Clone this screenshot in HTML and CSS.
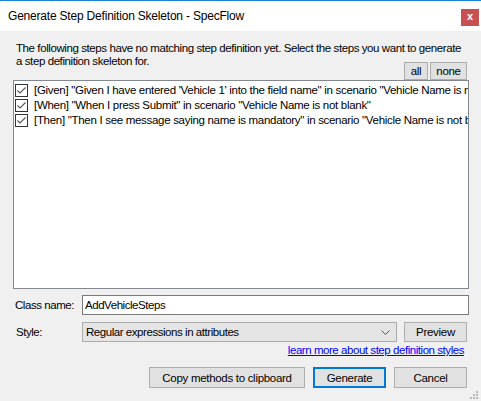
FILE: index.html
```html
<!DOCTYPE html>
<html>
<head>
<meta charset="utf-8">
<link rel="stylesheet" href="styles.css">
</head>
<body>
<div class="window">
  <div class="titlebar">
    <span class="title">Generate Step Definition Skeleton - SpecFlow</span>
    <span class="close">x</span>
  </div>
  <div class="content">
    <p class="intro">The following steps have no matching step definition yet. Select the steps you want to generate a step definition skeleton for.</p>
    <div class="toolbar">
      <button class="btn btn-all">all</button>
      <button class="btn btn-none">none</button>
    </div>
    <div class="list">
      <div class="item">
        <svg class="check" width="13" height="13" viewBox="0 0 13 13"><rect x="0.5" y="0.5" width="12" height="12" fill="#fff" stroke="#333"/><path d="M2.5 6.5 L5 9 L10.5 3.5" fill="none" stroke="#555" stroke-width="1.1"/></svg>
        <span class="text">[Given] "Given I have entered 'Vehicle 1' into the field name" in scenario "Vehicle Name is not blank"</span>
      </div>
      <div class="item">
        <svg class="check" width="13" height="13" viewBox="0 0 13 13"><rect x="0.5" y="0.5" width="12" height="12" fill="#fff" stroke="#333"/><path d="M2.5 6.5 L5 9 L10.5 3.5" fill="none" stroke="#555" stroke-width="1.1"/></svg>
        <span class="text">[When] "When I press Submit" in scenario "Vehicle Name is not blank"</span>
      </div>
      <div class="item">
        <svg class="check" width="13" height="13" viewBox="0 0 13 13"><rect x="0.5" y="0.5" width="12" height="12" fill="#fff" stroke="#333"/><path d="M2.5 6.5 L5 9 L10.5 3.5" fill="none" stroke="#555" stroke-width="1.1"/></svg>
        <span class="text">[Then] "Then I see message saying name is mandatory" in scenario "Vehicle Name is not blank"</span>
      </div>
    </div>
    <div class="row row-class">
      <span class="label">Class name:</span>
      <div class="input">AddVehicleSteps</div>
    </div>
    <div class="row row-style">
      <span class="label label-style">Style:</span>
      <div class="select">
        <span>Regular expressions in attributes</span>
        <svg class="chev" width="9" height="5" viewBox="0 0 9 5"><path d="M0.5 0.5 L4.5 4.5 L8.5 0.5" fill="none" stroke="#555" stroke-width="1"/></svg>
      </div>
      <button class="btn btn-preview">Preview</button>
    </div>
    <div class="linkrow"><a class="link" href="#">learn more about step definition styles</a></div>
    <div class="actions">
      <button class="btn btn-copy">Copy methods to clipboard</button>
      <button class="btn btn-generate">Generate</button>
      <button class="btn btn-cancel">Cancel</button>
    </div>
    <div class="gripline">
      <svg class="grip" width="9" height="9" viewBox="0 0 9 9"><g fill="#b8b8b8"><rect x="6" y="0" width="2" height="2"/><rect x="3" y="3" width="2" height="2"/><rect x="6" y="3" width="2" height="2"/><rect x="0" y="6" width="2" height="2"/><rect x="3" y="6" width="2" height="2"/><rect x="6" y="6" width="2" height="2"/></g></svg>
    </div>
  </div>
</div>
</body>
</html>
```
FILE: styles.css
```css
* { box-sizing: border-box; }
html, body { margin: 0; padding: 0; }
body {
  font-family: "Liberation Sans", Arial, sans-serif;
  font-size: 11.5px;
  letter-spacing: -0.45px;
  color: #000;
  background: #f0f0f0;
}
.window {
  width: 481px;
  height: 401px;
  display: flex;
  flex-direction: column;
  border-top: 1px solid #1883d7;
  background: #f0f0f0;
  overflow: hidden;
}
.titlebar {
  height: 30px;
  background: #fff;
  display: flex;
  align-items: center;
  justify-content: space-between;
  padding: 0 2px 0 8px;
  flex: none;
}
.title { font-size: 12px; letter-spacing: -0.2px; line-height: 14px; }
.close {
  width: 18px;
  height: 17px;
  background: #c75050;
  color: #fff;
  font-weight: bold;
  font-size: 11px;
  letter-spacing: 0;
  line-height: 15px;
  text-align: center;
  margin-top: 2px;
}
.content {
  flex: 1;
  display: flex;
  flex-direction: column;
  padding: 0 12px 0 13px;
}
.intro {
  margin: 11px 0 0 0;
  padding: 0 6px 0 3px;
  line-height: 13px;
  height: 20px;
  letter-spacing: -0.41px;
}
.toolbar {
  display: flex;
  justify-content: flex-end;
  gap: 2px;
  margin-right: 2px;
}
.btn {
  font-family: "Liberation Sans", Arial, sans-serif;
  font-size: 11.5px;
  letter-spacing: -0.3px;
  color: #000;
  background: #e1e1e1;
  border: 1px solid #adadad;
  padding: 0;
  margin: 0;
  border-radius: 0;
}
.btn-all { width: 24px; height: 18px; }
.btn-none { width: 37px; height: 18px; }
.list {
  height: 209px;
  background: #fff;
  border: 1px solid #828790;
  padding: 2px 0 0 1px;
  overflow: hidden;
}
.item {
  display: flex;
  align-items: center;
  height: 15px;
  gap: 6px;
  white-space: nowrap;
}
.check { flex: none; display: block; }
.text { line-height: 15px; letter-spacing: -0.3px; }
.row {
  display: flex;
  align-items: center;
}
.row-class { margin-top: 6px; }
.label { width: 69px; padding-left: 2px; }
.input {
  flex: 1;
  height: 20px;
  background: #fff;
  border: 1px solid #7a7a7a;
  padding-left: 2px;
  line-height: 18px;
}
.row-style { margin-top: 7px; }
.label-style { padding-left: 3px; }
.select {
  width: 315px;
  height: 20px;
  background: #e5e5e5;
  border: 1px solid #acacac;
  display: flex;
  align-items: center;
  justify-content: space-between;
  padding: 0 6px 0 3px;
}
.chev { display: block; }
.btn-preview {
  width: 63px;
  height: 20px;
  margin-left: 7px;
}
.linkrow {
  display: flex;
  justify-content: flex-end;
  margin-top: 2px;
  margin-right: 5px;
  line-height: 13px;
}
.link { color: #0000ff; text-decoration: underline; }
.actions {
  display: flex;
  justify-content: flex-end;
  gap: 8px;
  margin-top: 10px;
  margin-right: 2px;
}
.btn-copy { width: 156px; height: 21px; }
.btn-generate { width: 73px; height: 21px; border: 2px solid #0078d7; }
.btn-cancel { width: 73px; height: 21px; }
.gripline {
  display: flex;
  justify-content: flex-end;
  margin-top: 3px;
  margin-right: -10px;
}
.grip { display: block; }
```
